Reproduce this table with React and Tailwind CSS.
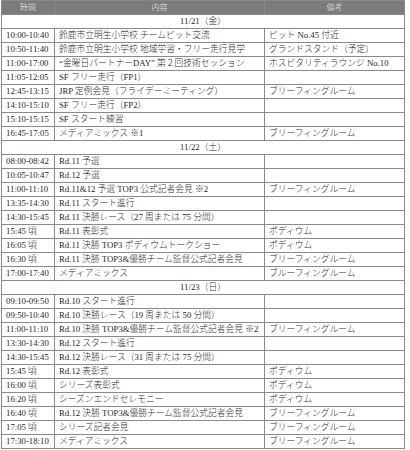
import React from "react";

const days = [
  {
    date: "11/21（金）",
    rows: [
      ["10:00-10:40", "鈴鹿市立明生小学校 チームピット交流", "ピット No.45 付近"],
      ["10:50-11:40", "鈴鹿市立明生小学校 地域学習・フリー走行見学", "グランドスタンド（予定）"],
      ["11:00-17:00", "“金曜日パートナーDAY” 第２回技術セッション", "ホスピタリティラウンジ No.10"],
      ["11:05-12:05", "SF フリー走行（FP1）", ""],
      ["12:45-13:15", "JRP 定例会見（フライデーミーティング）", "ブリーフィングルーム"],
      ["14:10-15:10", "SF フリー走行（FP2）", ""],
      ["15:10-15:15", "SF スタート練習", ""],
      ["16:45-17:05", "メディアミックス ※1", "ブリーフィングルーム"],
    ],
  },
  {
    date: "11/22（土）",
    rows: [
      ["08:00-08:42", "Rd.11 予選", ""],
      ["10:05-10:47", "Rd.12 予選", ""],
      ["11:00-11:10", "Rd.11&12 予選 TOP3 公式記者会見 ※2", "ブリーフィングルーム"],
      ["13:35-14:30", "Rd.11 スタート進行", ""],
      ["14:30-15:45", "Rd.11 決勝レース（27 周または 75 分間）", ""],
      ["15:45 頃", "Rd.11 表彰式", "ポディウム"],
      ["16:05 頃", "Rd.11 決勝 TOP3 ポディウムトークショー", "ポディウム"],
      ["16:30 頃", "Rd.11 決勝 TOP3&優勝チーム監督公式記者会見", "ブリーフィングルーム"],
      ["17:00-17:40", "メディアミックス", "ブルーフィングルーム"],
    ],
  },
  {
    date: "11/23（日）",
    rows: [
      ["09:10-09:50", "Rd.10 スタート進行", ""],
      ["09:50-10:40", "Rd.10 決勝レース（19 周または 50 分間）", ""],
      ["11:00-11:10", "Rd.10 決勝 TOP3&優勝チーム監督公式記者会見 ※2", "ブリーフィングルーム"],
      ["13:30-14:30", "Rd.12 スタート進行", ""],
      ["14:30-15:45", "Rd.12 決勝レース（31 周または 75 分間）", ""],
      ["15:45 頃", "Rd.12 表彰式", "ポディウム"],
      ["16:00 頃", "シリーズ表彰式", "ポディウム"],
      ["16:20 頃", "シーズンエンドセレモニー", "ポディウム"],
      ["16:40 頃", "Rd.12 決勝 TOP3&優勝チーム監督公式記者会見", "ブリーフィングルーム"],
      ["17:05 頃", "シリーズ記者会見", "ブリーフィングルーム"],
      ["17:30-18:10", "メディアミックス", "ブリーフィングルーム"],
    ],
  },
];

export default function App() {
  const cell = "border border-[#8a8a8a] px-[4px] h-[14px] p-0 leading-none whitespace-nowrap overflow-hidden";
  return (
    <div
      className="w-[410px] h-[450px] bg-white overflow-hidden pl-[1px]"
      style={{ fontFamily: '"Liberation Serif", "Noto Sans CJK JP", serif' }}
    >
      <table className="w-[404px] border-collapse table-fixed text-[8.75px] font-light text-[#1f1f1f]">
        <colgroup>
          <col className="w-[53px]" />
          <col className="w-[210px]" />
          <col />
        </colgroup>
        <thead>
          <tr className="bg-[#7b7b7b] text-[#e8e8e8]">
            <th className={cell + " font-light text-center text-[8px]"}>時間</th>
            <th className={cell + " font-light text-center text-[8px]"}>内容</th>
            <th className={cell + " font-light text-center text-[8px]"}>備考</th>
          </tr>
        </thead>
        <tbody>
          {days.map((d) => (
            <React.Fragment key={d.date}>
              <tr>
                <td colSpan={3} className={cell + " text-center"}>{d.date}</td>
              </tr>
              {d.rows.map((r, i) => (
                <tr key={i}>
                  <td className={cell}>{r[0]}</td>
                  <td className={cell}>{r[1]}</td>
                  <td className={cell}>{r[2]}</td>
                </tr>
              ))}
            </React.Fragment>
          ))}
        </tbody>
      </table>
    </div>
  );
}
